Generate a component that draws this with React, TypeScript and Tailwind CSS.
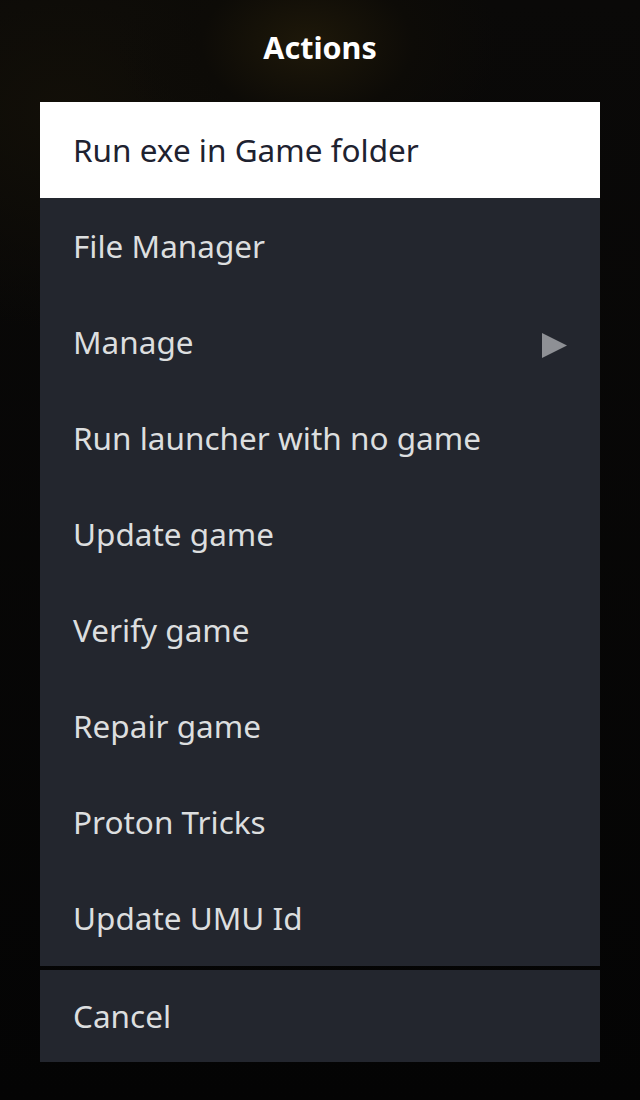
const items = [
  "Run exe in Game folder",
  "File Manager",
  "Manage",
  "Run launcher with no game",
  "Update game",
  "Verify game",
  "Repair game",
  "Proton Tricks",
  "Update UMU Id",
];

const App = () => {
  return (
    <div className="w-[640px] h-[1100px] overflow-hidden bg-[#050505] bg-[radial-gradient(ellipse_30%_12%_at_48%_4%,#1e1809_0%,#0d0b07_55%,transparent_100%),radial-gradient(ellipse_40%_20%_at_10%_10%,#120f08_0%,transparent_100%),linear-gradient(#0a0908,#040404)] font-['Noto_Sans',sans-serif] flex flex-col items-center">
      <h1 className="h-[102px] pt-[27px] text-[30.5px] leading-[40px] font-bold text-white">Actions</h1>
      <div className="w-[560px] flex flex-col">
        {items.map((label, i) => (
          <div
            key={label}
            className={
              i === 0
                ? "h-[96px] px-[33px] flex items-center justify-between bg-white text-[#1e2230] text-[31.5px]"
                : "h-[96px] px-[33px] flex items-center justify-between bg-[#23262e] text-[#dcdedf] text-[31.5px]"
            }
          >
            <span>{label}</span>
            {label === "Manage" && (
              <svg width="25" height="25" viewBox="0 0 24 24" className="mt-[6px] text-[#8e9095]">
                <path d="M0 0 L24 12 L0 24 Z" fill="currentColor" />
              </svg>
            )}
          </div>
        ))}
        <div className="h-[92px] mt-[4px] px-[33px] flex items-center bg-[#23262e] text-[#dcdedf] text-[31.5px]">
          <span>Cancel</span>
        </div>
      </div>
    </div>
  );
};

export default App;
